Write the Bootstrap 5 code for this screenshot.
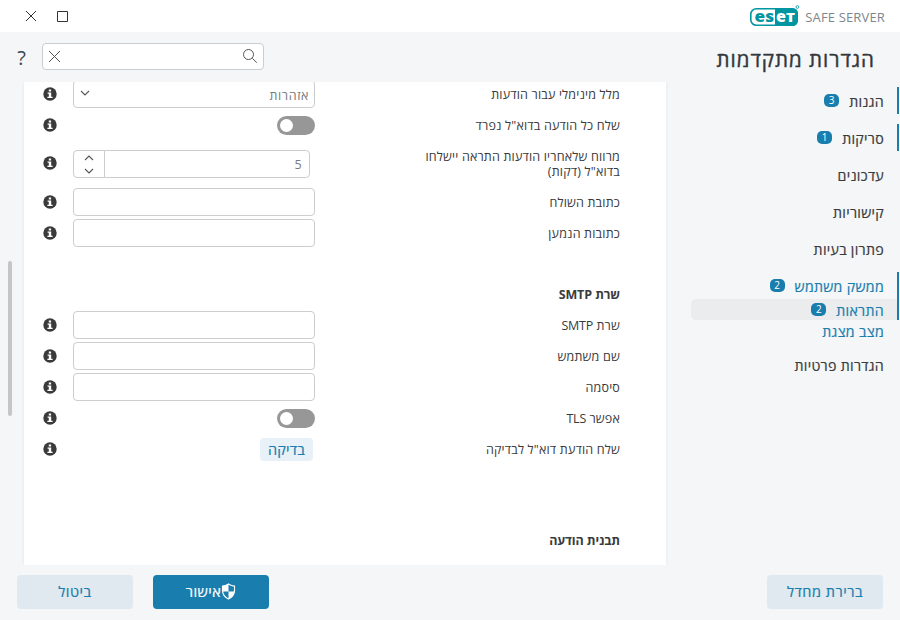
<!DOCTYPE html>
<html lang="he" dir="rtl">
<head>
<meta charset="utf-8">
<meta name="viewport" content="width=device-width, initial-scale=1">
<title>ESET Safe Server</title>
<link href="https://cdn.jsdelivr.net/npm/bootstrap@5.3.0/dist/css/bootstrap.min.css" rel="stylesheet">
<style>
body{height:620px;width:900px;overflow:hidden;background:#f4f6f8;color:#3a3a3c;font-family:"Open Sans","Noto Sans",sans-serif;font-size:12.5px;line-height:15px}
svg{display:block;flex:none}
.titlebar{height:32px;padding:0 15px 0 25px}
.product{font-size:13px;color:#7d868c;letter-spacing:.15px;padding-top:2px}
.brand{gap:5px}
.topbar{height:50px;padding:0 25px 0 14px}
.page-title{font-size:20.5px;line-height:26px;letter-spacing:1px;color:#33373b;padding-top:4px;-webkit-text-stroke:.4px #33373b}
.search{width:222px;height:27px;border:1px solid #cbcdcf;border-radius:4px;padding:0 4px 1px 5px;margin-top:-1px}
.help{font-size:20px;color:#3b4650;width:12px}
.workarea{height:483px}
.sidebar{width:234px;padding-top:5px;font-size:14.2px;letter-spacing:.3px;-webkit-text-stroke:.2px currentColor}
.nav-group{border-right:2px solid transparent;margin:0 1px 10px 0}
.nav-group.changed{border-color:#197dae}
.entry{height:27px;padding:1px 13px 0 0;gap:10px}
.entry.sub{height:21px}
.blue{color:#197dae}
.current{background:#ebeced;border-radius:5px 0 0 5px;margin-left:25px}
.count{background:#197dae;color:#fff;width:15px;height:13px;border-radius:5px;font-size:10px;line-height:13px;letter-spacing:0;text-align:center;margin-bottom:1px;-webkit-text-stroke:0}
.panel{width:642px;box-shadow:0 0 3px rgba(0,0,0,.08);clip-path:inset(0 -4px);height:483px;overflow:hidden}
.fields{margin-top:-3px}
.field{height:31px;padding:0 46px 0 19px}
.field.tall{height:46px}
.field>svg{margin-bottom:1px}
.field.tall>svg{margin-bottom:2px}
.caption{width:305px;letter-spacing:.18px}
.caption span{display:block;max-width:206px}
.caption bdi{letter-spacing:-.25px}
.control{width:242px;margin-left:16px}
.box{height:28px;border:1px solid #cbcdcf;border-radius:4px;background:#fff;color:#77797b;width:242px;letter-spacing:.3px;margin-bottom:1px}
.box.spin{width:237px;padding-right:7px;margin:0 5px 0 0}
.pick{padding:0 5px 2px 6px;letter-spacing:.6px}
.section{height:31px;margin-top:30px;padding-right:46px;font-weight:700;letter-spacing:-.1px}
.section.last{margin-top:60px}
.switch{width:38px;height:19px;border-radius:10px;background:#979797;padding:3px}
.knob{width:13px;height:13px;border-radius:50%;background:#fff}
.stepper{width:31px;border-right:1px solid #cbcdcf}
.test{height:23px;width:53px;background:#e8f1f7;color:#197dae;border-radius:4px;font-size:14.5px;margin-right:2px;letter-spacing:.2px;-webkit-text-stroke:.2px #197dae}
.gutter{width:24px;padding:179px 0 0 8px}
.thumb{width:4px;height:155px;border-radius:2px;background:#c4c6c8}
.footer-bar{height:55px;padding:10px 17px 11px;gap:20px}
.action{width:116px;height:34px;border-radius:4px;background:#dfe9ef;color:#197dae;font-size:14.5px;letter-spacing:.5px;border:0;padding:0 0 1px;-webkit-text-stroke:.2px currentColor}
.action.primary{background:#197dae;color:#fff}
</style>
</head>
<body>
<svg width="0" height="0" class="position-absolute"><defs>
<symbol id="info" viewBox="0 0 14 14"><circle cx="7" cy="7" r="6.7" fill="#3a3a3a"/><path d="M5.8 2.5h2.3v2H5.8zM4.6 5.6h3.6v4.2h1.4v1.3H4.4V9.8h1.4V6.8H4.6z" fill="#fff"/></symbol>
<symbol id="down" viewBox="0 0 10 6"><path d="M1 1l4 4 4-4" fill="none" stroke="#555" stroke-width="1.1"/></symbol>
<symbol id="up" viewBox="0 0 10 6"><path d="M1 5l4-4 4 4" fill="none" stroke="#555" stroke-width="1.1"/></symbol>
</defs></svg>

<header class="titlebar bg-white d-flex align-items-center justify-content-between">
  <div class="brand d-flex align-items-center" dir="ltr">
    <svg width="50" height="24" viewBox="0 0 50 24" font-family="Open Sans, sans-serif" font-weight="800" font-size="16">
      <rect x=".8" y="4.8" width="46.4" height="16.4" rx="5.5" fill="#fff" stroke="#0096a1" stroke-width="1.6"/>
      <path d="M25 4h17q6 0 6 6v6q0 6-6 6H25z" fill="#0096a1"/>
      <text x="4.600" y="17.500" fill="#0096a1" textLength="19.500" lengthAdjust="spacingAndGlyphs">es</text>
      <text x="26" y="17.500" fill="#fff" textLength="10" lengthAdjust="spacingAndGlyphs">e</text>
      <text x="36" y="17.500" font-size="12.500" fill="#fff" textLength="9" lengthAdjust="spacingAndGlyphs">T</text>
      <circle cx="47.400" cy="3" r="1.400" fill="none" stroke="#0096a1" stroke-width=".8"/>
    </svg>
    <span class="product">SAFE SERVER</span>
  </div>
  <div class="d-flex align-items-center" dir="ltr">
    <svg width="12" height="12" viewBox="0 0 12 12"><path d="M1 1l10 10M11 1L1 11" stroke="#333" fill="none"/></svg>
    <svg class="ms-3" width="16" height="12" viewBox="-4 0 16 12"><path d="M.5 1.5h10v10H.5z" stroke="#333" fill="none"/></svg>
  </div>
</header>

<div class="topbar d-flex align-items-center justify-content-between">
  <div class="page-title">הגדרות מתקדמות</div>
  <div class="d-flex align-items-center">
    <div class="search bg-white d-flex align-items-center justify-content-between">
      <svg width="16" height="16" viewBox="0 0 16 16"><circle cx="5.500" cy="6.500" r="5" stroke="#555" fill="none"/><path d="M9.300 10.300l4.500 4.300" stroke="#555"/></svg>
      <svg width="13" height="13" viewBox="0 0 13 13"><path d="M1 1l11 11M12 1L1 12" stroke="#555" fill="none"/></svg>
    </div>
    <div class="help me-3">?</div>
  </div>
</div>

<main class="workarea d-flex">
  <nav class="sidebar">
    <div class="nav-group changed"><div class="entry d-flex align-items-center"><span>הגנות</span><span class="count">3</span></div></div>
    <div class="nav-group changed"><div class="entry d-flex align-items-center"><span>סריקות</span><span class="count">1</span></div></div>
    <div class="nav-group"><div class="entry d-flex align-items-center"><span>עדכונים</span></div></div>
    <div class="nav-group"><div class="entry d-flex align-items-center"><span>קישוריות</span></div></div>
    <div class="nav-group"><div class="entry d-flex align-items-center"><span>פתרון בעיות</span></div></div>
    <div class="nav-group changed mb-0 blue">
      <div class="entry d-flex align-items-center"><span>ממשק משתמש</span><span class="count">2</span></div>
      <div class="entry sub current d-flex align-items-center"><span>התראות</span><span class="count">2</span></div>
    </div>
    <div class="nav-group blue"><div class="entry sub d-flex align-items-center"><span>מצב מצגת</span></div></div>
    <div class="nav-group"><div class="entry d-flex align-items-center"><span>הגדרות פרטיות</span></div></div>
  </nav>
  <section class="panel bg-white">
    <div class="fields">
      <div class="field d-flex align-items-center"><label class="caption"><span>מלל מינימלי עבור הודעות</span></label><div class="control"><div class="box pick d-flex align-items-center justify-content-between"><span class="pt-1">אזהרות</span><svg width="10" height="6"><use href="#down"/></svg></div></div><svg width="14" height="14"><use href="#info"/></svg></div>
      <div class="field d-flex align-items-center"><label class="caption"><span>שלח כל הודעה בדוא"ל נפרד</span></label><div class="control"><div class="switch d-flex justify-content-end"><div class="knob"></div></div></div><svg width="14" height="14"><use href="#info"/></svg></div>
      <div class="field tall d-flex align-items-center"><label class="caption"><span>מרווח שלאחריו הודעות התראה יישלחו בדוא"ל (דקות)</span></label><div class="control"><div class="box spin d-flex justify-content-between"><span class="align-self-center">5</span><div class="stepper d-flex flex-column align-items-center justify-content-around"><svg width="10" height="6"><use href="#up"/></svg><svg width="10" height="6"><use href="#down"/></svg></div></div></div><svg width="14" height="14"><use href="#info"/></svg></div>
      <div class="field d-flex align-items-center"><label class="caption"><span>כתובת השולח</span></label><div class="control"><div class="box"></div></div><svg width="14" height="14"><use href="#info"/></svg></div>
      <div class="field d-flex align-items-center"><label class="caption"><span>כתובות הנמען</span></label><div class="control"><div class="box"></div></div><svg width="14" height="14"><use href="#info"/></svg></div>
      <div class="section d-flex align-items-center">שרת SMTP</div>
      <div class="field d-flex align-items-center"><label class="caption"><span>שרת <bdi>SMTP</bdi></span></label><div class="control"><div class="box"></div></div><svg width="14" height="14"><use href="#info"/></svg></div>
      <div class="field d-flex align-items-center"><label class="caption"><span>שם משתמש</span></label><div class="control"><div class="box"></div></div><svg width="14" height="14"><use href="#info"/></svg></div>
      <div class="field d-flex align-items-center"><label class="caption"><span>סיסמה</span></label><div class="control"><div class="box"></div></div><svg width="14" height="14"><use href="#info"/></svg></div>
      <div class="field d-flex align-items-center"><label class="caption"><span>אפשר <bdi>TLS</bdi></span></label><div class="control"><div class="switch d-flex justify-content-end"><div class="knob"></div></div></div><svg width="14" height="14"><use href="#info"/></svg></div>
      <div class="field d-flex align-items-center"><label class="caption"><span>שלח הודעת דוא"ל לבדיקה</span></label><div class="control"><div class="test d-flex align-items-center justify-content-center">בדיקה</div></div><svg width="14" height="14"><use href="#info"/></svg></div>
      <div class="section last d-flex align-items-center">תבנית הודעה</div>
    </div>
  </section>
  <div class="gutter" dir="ltr"><div class="thumb"></div></div>
</main>

<footer class="footer-bar d-flex">
  <button class="action">ברירת מחדל</button>
  <div class="flex-grow-1"></div>
  <button class="action primary d-flex align-items-center justify-content-center"><svg width="15" height="17" viewBox="0 0 15 17"><path d="M7.5 1q3 2 6 2.2v4.3q0 5.500-6 8.500q-6-3-6-8.500V3.200Q4.500 3 7.500 1z" fill="none" stroke="#fff" stroke-width="1.200"/><path d="M7.500 1v7.500h-6V3.200Q4.500 3 7.500 1zM7.500 8.500h6q-.6 4.500-6 7.500z" fill="#fff"/></svg><span>אישור</span></button>
  <button class="action">ביטול</button>
</footer>
<script src="https://cdn.jsdelivr.net/npm/bootstrap@5.3.0/dist/js/bootstrap.bundle.min.js"></script>
</body>
</html>
